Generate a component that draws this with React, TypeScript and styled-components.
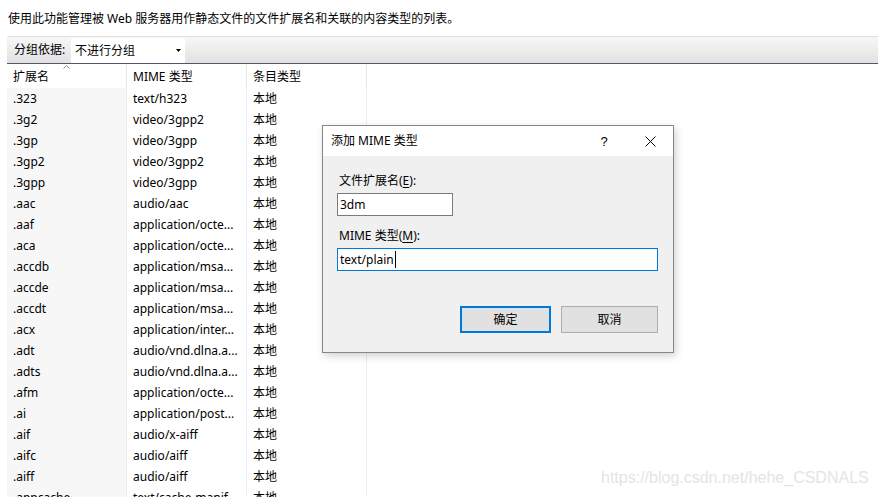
import React from "react";
import { styled, createGlobalStyle } from "styled-components";

const GlobalStyle = createGlobalStyle`
  html, body {
    margin: 0;
    padding: 0;
    background: #ffffff;
  }
  body {
    font-family: "Noto Sans", "Noto Sans CJK SC", sans-serif;
    font-size: 12px;
    color: #000000;
  }
`;

const rows: [string, string][] = [
  [".323", "text/h323"],
  [".3g2", "video/3gpp2"],
  [".3gp", "video/3gpp"],
  [".3gp2", "video/3gpp2"],
  [".3gpp", "video/3gpp"],
  [".aac", "audio/aac"],
  [".aaf", "application/octe..."],
  [".aca", "application/octe..."],
  [".accdb", "application/msa..."],
  [".accde", "application/msa..."],
  [".accdt", "application/msa..."],
  [".acx", "application/inter..."],
  [".adt", "audio/vnd.dlna.a..."],
  [".adts", "audio/vnd.dlna.a..."],
  [".afm", "application/octe..."],
  [".ai", "application/post..."],
  [".aif", "audio/x-aiff"],
  [".aifc", "audio/aiff"],
  [".aiff", "audio/aiff"],
  [".appcache", "text/cache-manif..."],
];

export default function App() {
  return (
    <>
      <GlobalStyle />
      <Page>
        <Description>
          使用此功能管理被 Web 服务器用作静态文件的文件扩展名和关联的内容类型的列表。
        </Description>
        <ListPanel>
          <Toolbar>
            <GroupLabel>分组依据:</GroupLabel>
            <Combo>
              <span>不进行分组</span>
              <svg width="5" height="3" viewBox="0 0 5 3">
                <path d="M0 0 L5 0 L2.5 3 Z" fill="#000" />
              </svg>
            </Combo>
          </Toolbar>
          <HeaderRow>
            <HeaderCell $sorted>
              扩展名
              <SortArrow width="7" height="4" viewBox="0 0 7 4">
                <polyline points="0.5,3.5 3.5,0.5 6.5,3.5" fill="none" stroke="#8a8a8a" strokeWidth="1" />
              </SortArrow>
            </HeaderCell>
            <HeaderCell>MIME 类型</HeaderCell>
            <HeaderCell>条目类型</HeaderCell>
            <Filler />
          </HeaderRow>
          {rows.map(([ext, mime]) => (
            <Row key={ext}>
              <Cell $shaded>{ext}</Cell>
              <Cell>{mime}</Cell>
              <Cell>本地</Cell>
              <Filler />
            </Row>
          ))}
        </ListPanel>

        <Dialog>
          <TitleBar>
            <Title>添加 MIME 类型</Title>
            <TitleButton>?</TitleButton>
            <TitleButton>
              <svg width="11" height="11" viewBox="0 0 11 11">
                <path d="M0.5 0.5 L10.5 10.5 M10.5 0.5 L0.5 10.5" stroke="#000" strokeWidth="1" />
              </svg>
            </TitleButton>
          </TitleBar>
          <DialogBody>
            <FieldLabel>
              文件扩展名(<u>E</u>):
            </FieldLabel>
            <TextBox $width={116}>3dm</TextBox>
            <FieldLabel $gap={12}>
              MIME 类型(<u>M</u>):
            </FieldLabel>
            <TextBox $width={321} $focused>
              text/plain
              <Caret />
            </TextBox>
            <ButtonRow>
              <DialogButton $width={91} $default>
                确定
              </DialogButton>
              <DialogButton $width={97}>取消</DialogButton>
            </ButtonRow>
          </DialogBody>
        </Dialog>

        <Watermark>https://blog.csdn.net/hehe_CSDNALS</Watermark>
      </Page>
    </>
  );
}

const Page = styled.div`
  position: relative;
  width: 878px;
  height: 497px;
  overflow: hidden;
  background: #ffffff;
`;

const Description = styled.div`
  height: 36px;
  box-sizing: border-box;
  padding: 11px 0 0 8px;
  line-height: 16px;
  white-space: nowrap;
`;

const ListPanel = styled.div`
  margin-left: 7px;
`;

const Toolbar = styled.div`
  display: flex;
  align-items: stretch;
  height: 26px;
  border-top: 1px solid #e1e1e1;
  border-bottom: 1px solid #56536a;
  background: linear-gradient(#f7f7f7, #e3e2e3);
  padding-left: 7px;
`;

const GroupLabel = styled.span`
  display: flex;
  align-items: center;
  width: 57px;
  line-height: 16px;
`;

const Combo = styled.div`
  display: flex;
  align-items: center;
  justify-content: space-between;
  width: 114px;
  box-sizing: border-box;
  padding: 0 4px 0 4px;
  background: #ffffff;
  line-height: 16px;
  margin-top: 1px;
`;

const HeaderRow = styled.div`
  display: grid;
  grid-template-columns: 120px 120px 120px 1fr;
  height: 24px;
`;

const HeaderCell = styled.div<{ $sorted?: boolean }>`
  position: relative;
  display: flex;
  align-items: center;
  padding-left: 6px;
  padding-top: 1px;
  border-right: 1px solid #e6e6e6;
  line-height: 16px;
  white-space: nowrap;
`;

const SortArrow = styled.svg`
  position: absolute;
  top: 1px;
  left: 56px;
`;

const Row = styled.div`
  display: grid;
  grid-template-columns: 120px 120px 120px 1fr;
  height: 21px;
`;

const Cell = styled.div<{ $shaded?: boolean }>`
  display: flex;
  align-items: center;
  padding-left: 6px;
  border-right: 1px solid #e8eef6;
  background: ${({ $shaded }) => ($shaded ? "#f7f7f7" : "#ffffff")};
  line-height: 16px;
  white-space: nowrap;
  overflow: hidden;
  color: #000000;
`;

const Filler = styled.div``;

const Dialog = styled.div`
  position: absolute;
  left: 322px;
  top: 125px;
  width: 352px;
  height: 228px;
  box-sizing: border-box;
  border: 1px solid #868686;
  background: #f0f0f0;
  box-shadow: 2px 3px 8px rgba(0, 0, 0, 0.18);
  display: flex;
  flex-direction: column;
`;

const TitleBar = styled.div`
  display: flex;
  align-items: stretch;
  height: 30px;
  background: #ffffff;
`;

const Title = styled.div`
  flex: 1;
  display: flex;
  align-items: center;
  padding-left: 8px;
  line-height: 16px;
`;

const TitleButton = styled.div`
  width: 46px;
  display: flex;
  align-items: center;
  justify-content: center;
  font-family: "Liberation Sans", sans-serif;
  font-size: 13px;
`;

const DialogBody = styled.div`
  display: flex;
  flex-direction: column;
  align-items: flex-start;
  padding: 17px 15px 0 14px;
`;

const FieldLabel = styled.div<{ $gap?: number }>`
  line-height: 16px;
  padding-left: 2px;
  margin-top: ${({ $gap }) => $gap ?? 0}px;
  margin-bottom: 4px;

  u {
    text-underline-offset: 2px;
  }
`;

const TextBox = styled.div<{ $width: number; $focused?: boolean }>`
  display: flex;
  align-items: center;
  width: ${({ $width }) => $width}px;
  height: 23px;
  box-sizing: border-box;
  padding-left: 2px;
  background: #ffffff;
  border: 1px solid ${({ $focused }) => ($focused ? "#0078d7" : "#7a7a7a")};
  line-height: 16px;
`;

const Caret = styled.span`
  display: inline-block;
  width: 1px;
  height: 17px;
  background: #000000;
  margin-left: 1px;
`;

const ButtonRow = styled.div`
  align-self: stretch;
  display: flex;
  justify-content: flex-end;
  gap: 10px;
  margin-top: 35px;
`;

const DialogButton = styled.div<{ $width: number; $default?: boolean }>`
  display: flex;
  align-items: center;
  justify-content: center;
  width: ${({ $width }) => $width}px;
  height: 27px;
  box-sizing: border-box;
  background: #e1e1e1;
  border: ${({ $default }) => ($default ? "2px solid #0078d7" : "1px solid #adadad")};
  line-height: 16px;
`;

const Watermark = styled.div`
  position: absolute;
  left: 601px;
  top: 468px;
  font-family: "Liberation Sans", Arial, sans-serif;
  font-size: 16px;
  line-height: 20px;
  color: #e4e4e4;
  white-space: nowrap;
`;
